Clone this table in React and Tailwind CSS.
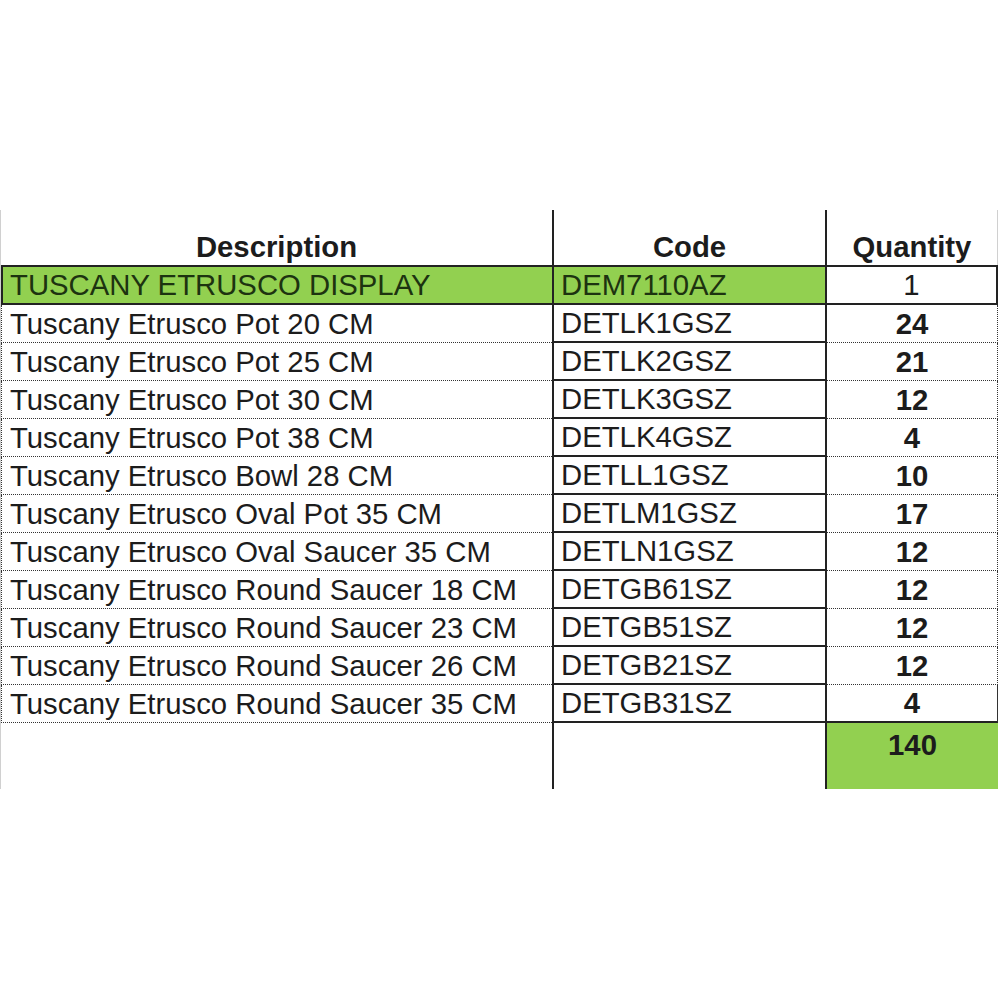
const ROWS = [
  ["Tuscany Etrusco Pot 20 CM", "DETLK1GSZ", "24"],
  ["Tuscany Etrusco Pot 25 CM", "DETLK2GSZ", "21"],
  ["Tuscany Etrusco Pot 30 CM", "DETLK3GSZ", "12"],
  ["Tuscany Etrusco Pot 38 CM", "DETLK4GSZ", "4"],
  ["Tuscany Etrusco Bowl 28 CM", "DETLL1GSZ", "10"],
  ["Tuscany Etrusco Oval Pot 35 CM", "DETLM1GSZ", "17"],
  ["Tuscany Etrusco Oval Saucer 35 CM", "DETLN1GSZ", "12"],
  ["Tuscany Etrusco Round Saucer 18 CM", "DETGB61SZ", "12"],
  ["Tuscany Etrusco Round Saucer 23 CM", "DETGB51SZ", "12"],
  ["Tuscany Etrusco Round Saucer 26 CM", "DETGB21SZ", "12"],
  ["Tuscany Etrusco Round Saucer 35 CM", "DETGB31SZ", "4"],
];

export default function App() {
  return (
    <div className="min-h-screen bg-white pt-[210px] font-['Liberation_Sans',Arial,sans-serif] text-[29.3px] leading-none text-[#1c1c1c]">
      <div className="w-[998px] border-l border-[#d0d0d0]">
        {/* header */}
        <div className="grid h-[55px] grid-cols-[551px_275px_171px] grid-rows-[55px] font-bold">
          <div className="flex items-end justify-center pb-[4px]">Description</div>
          <div className="flex items-end justify-center border-x-2 border-[#222] pb-[4px]">Code</div>
          <div className="flex items-end justify-center border-r border-[#d0d0d0] pb-[4px]">Quantity</div>
        </div>

        {/* display row */}
        <div className="grid h-[40px] grid-cols-[551px_275px_171px] grid-rows-[40px] text-[#1d3310]">
          <div className="flex items-center whitespace-nowrap border-y-2 border-l-2 border-[#222] bg-[#92d050] pl-[7px]">
            TUSCANY ETRUSCO DISPLAY
          </div>
          <div className="flex items-center border-2 border-[#222] bg-[#92d050] pl-[7px]">DEM7110AZ</div>
          <div className="flex items-center justify-center border-y-2 border-r-2 border-[#222] text-[#1c1c1c]">1</div>
        </div>

        {ROWS.map(([desc, code, qty], i) => {
          const last = i === ROWS.length - 1;
          return (
            <div key={code} className="grid h-[38px] grid-cols-[551px_275px_171px] grid-rows-[38px]">
              <div className="flex items-center whitespace-nowrap border-b border-l border-dotted border-[#333] pl-[8px]">
                {desc}
              </div>
              <div className="flex items-center border-x-2 border-b-2 border-[#222] pl-[7px]">{code}</div>
              <div
                className={`flex items-center justify-center border-r border-dotted border-[#333] font-bold ${
                  last ? "border-b-2 border-b-[#222] border-solid" : "border-b"
                }`}
              >
                {qty}
              </div>
            </div>
          );
        })}

        {/* total */}
        <div className="grid h-[66px] grid-cols-[551px_275px_171px] grid-rows-[66px]">
          <div />
          <div className="border-x-2 border-[#222]" />
          <div className="flex justify-center bg-[#92d050] pt-[7px] font-bold">140</div>
        </div>
      </div>
    </div>
  );
}
